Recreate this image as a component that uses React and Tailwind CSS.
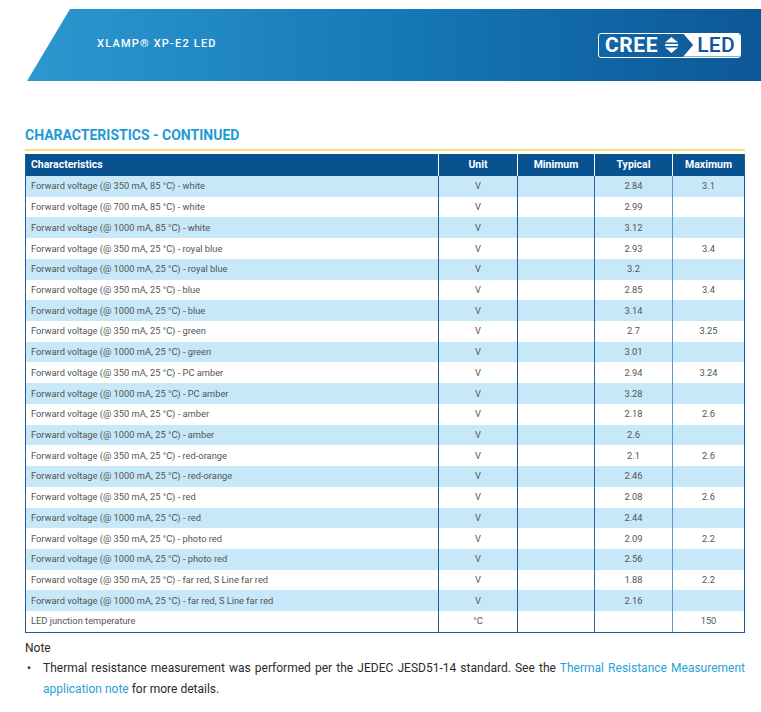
const rows = [
  ["Forward voltage (@ 350 mA, 85 °C) - white", "V", "2.84", "3.1"],
  ["Forward voltage (@ 700 mA, 85 °C) - white", "V", "2.99", ""],
  ["Forward voltage (@ 1000 mA, 85 °C) - white", "V", "3.12", ""],
  ["Forward voltage (@ 350 mA, 25 °C) - royal blue", "V", "2.93", "3.4"],
  ["Forward voltage (@ 1000 mA, 25 °C) - royal blue", "V", "3.2", ""],
  ["Forward voltage (@ 350 mA, 25 °C) - blue", "V", "2.85", "3.4"],
  ["Forward voltage (@ 1000 mA, 25 °C) - blue", "V", "3.14", ""],
  ["Forward voltage (@ 350 mA, 25 °C) - green", "V", "2.7", "3.25"],
  ["Forward voltage (@ 1000 mA, 25 °C) - green", "V", "3.01", ""],
  ["Forward voltage (@ 350 mA, 25 °C) - PC amber", "V", "2.94", "3.24"],
  ["Forward voltage (@ 1000 mA, 25 °C) - PC amber", "V", "3.28", ""],
  ["Forward voltage (@ 350 mA, 25 °C) - amber", "V", "2.18", "2.6"],
  ["Forward voltage (@ 1000 mA, 25 °C) - amber", "V", "2.6", ""],
  ["Forward voltage (@ 350 mA, 25 °C) - red-orange", "V", "2.1", "2.6"],
  ["Forward voltage (@ 1000 mA, 25 °C) - red-orange", "V", "2.46", ""],
  ["Forward voltage (@ 350 mA, 25 °C) - red", "V", "2.08", "2.6"],
  ["Forward voltage (@ 1000 mA, 25 °C) - red", "V", "2.44", ""],
  ["Forward voltage (@ 350 mA, 25 °C) - photo red", "V", "2.09", "2.2"],
  ["Forward voltage (@ 1000 mA, 25 °C) - photo red", "V", "2.56", ""],
  ["Forward voltage (@ 350 mA, 25 °C) - far red, S Line far red", "V", "1.88", "2.2"],
  ["Forward voltage (@ 1000 mA, 25 °C) - far red, S Line far red", "V", "2.16", ""],
  ["LED junction temperature", "°C", "", "150"],
];

// same column widths for header and body
const cols = "grid grid-cols-[412px_79px_77px_78px_72px]";

function CreeLogo() {
  return (
    <div className="flex h-[25px] items-stretch rounded-[3px] border border-white overflow-hidden">
      <div className="flex items-center gap-[7px] pl-[6px] pr-[5px]">
        <span className="text-[21px] font-bold leading-none text-white tracking-[0.6px]">CREE</span>
        <svg width="13" height="16" viewBox="0 0 13 16" fill="white">
          <polygon points="6.5,0 13,5.5 0,5.5" />
          <rect x="0" y="7" width="13" height="2" />
          <polygon points="0,10.5 13,10.5 6.5,16" />
        </svg>
      </div>
      <div className="flex items-center bg-white pl-[14px] pr-[5px] [clip-path:polygon(0_0,100%_0,100%_100%,0_100%,10px_50%)]">
        <span className="text-[21px] font-medium leading-none text-[#14539a] tracking-[0.3px]">LED</span>
      </div>
    </div>
  );
}

export default function App() {
  return (
    <div className="w-[761px] h-[712px] bg-white font-['Roboto',sans-serif] overflow-hidden">
      <div className="pt-[9px]">
        <div className="ml-[27px] h-[72px] flex items-center justify-between pl-[70px] pr-[20px] bg-gradient-to-r from-[#2c98ce] via-[#1579b8] to-[#0e5797] [clip-path:polygon(43px_0,100%_0,100%_100%,0_100%)]">
          <span className="text-[11px] font-medium tracking-[1.2px] text-white -mt-[2px]">XLAMP® XP-E2 LED</span>
          <CreeLogo />
        </div>
      </div>

      <div className="pl-[25px] pr-[16px] pt-[46px]">
        <h2 className="text-[14px] font-bold text-[#1e9ad6] leading-[16px]">CHARACTERISTICS - CONTINUED</h2>
        <div className="mt-[6px] h-[2px] bg-[#f8df79]" />
        <div className="mt-[3px] w-[720px] border-b border-l border-r border-[#1f5d98]">
          <div className={`${cols} h-[22px] bg-[#07528f] text-white text-[10.5px] font-bold`}>
            <div className="flex items-center pl-[5px]">Characteristics</div>
            <div className="flex items-center justify-center border-l border-white">Unit</div>
            <div className="flex items-center justify-center border-l border-white">Minimum</div>
            <div className="flex items-center justify-center border-l border-white">Typical</div>
            <div className="flex items-center justify-center border-l border-white">Maximum</div>
          </div>
          {rows.map((r, i) => (
            <div
              key={i}
              className={`${cols} h-[20.72px] text-[9.3px] text-[#555] ${
                i % 2 === 0 ? "bg-[#c6e8f8]" : "bg-white"
              }`}
            >
              <div className="flex items-center pl-[5px]">{r[0]}</div>
              <div className="flex items-center justify-center border-l border-[#1f5d98]">{r[1]}</div>
              <div className="flex items-center justify-center border-l border-[#1f5d98]"></div>
              <div className="flex items-center justify-center border-l border-[#2c68a2]">{r[2]}</div>
              <div className="flex items-center justify-center border-l border-[#5f97c9]">{r[3]}</div>
            </div>
          ))}
        </div>

        <div className="mt-[6px] text-[12px] text-[#2a2a2a]">
          <div className="leading-[19px]">Note</div>
          <div className="flex leading-[21px]">
            <span className="w-[18px] shrink-0 pl-[2px]">•</span>
            <p className="text-justify">
              Thermal resistance measurement was performed per the JEDEC JESD51-14 standard. See the{" "}
              <span className="text-[#2a9fd8]">Thermal Resistance Measurement</span>{" "}
              <span className="text-[#2a9fd8]">application note</span> for more details.
            </p>
          </div>
        </div>
      </div>
    </div>
  );
}
